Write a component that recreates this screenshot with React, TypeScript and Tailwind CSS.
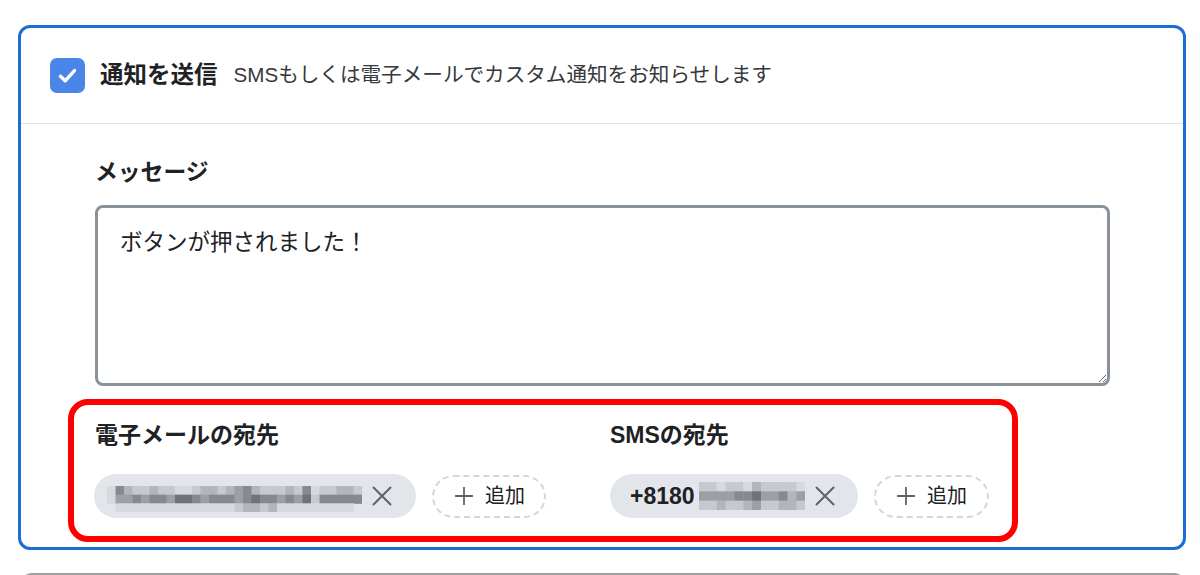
import React from "react";

const FONT = '"Liberation Sans", "Noto Sans CJK JP", sans-serif';

const SHADES = ["transparent", "#d6d9dd", "#c6c9cd", "#b2b5b9", "#9c9fa3", "#86898d", "#6f7276"];

function Pixelate({ rows, cell, w, h }: { rows: number[][]; cell: number; w: number; h: number }) {
  return (
    <svg width={w} height={h} viewBox={`0 0 ${w} ${h}`} className="block shrink-0">
      {rows.map((row, r) =>
        row.map((v, c) =>
          v === 0 ? null : (
            <rect key={`${r}-${c}`} x={c * cell} y={r * (h / rows.length)} width={cell + 0.5} height={h / rows.length + 0.5} fill={SHADES[v]} />
          )
        )
      )}
    </svg>
  );
}

function XIcon() {
  return (
    <svg width="20" height="20" viewBox="0 0 20 20" className="block shrink-0">
      <path d="M1.5 1.5 L18.5 18.5 M18.5 1.5 L1.5 18.5" stroke="#5f6368" strokeWidth="2" strokeLinecap="round" fill="none" />
    </svg>
  );
}

function PlusIcon() {
  return (
    <svg width="18" height="18" viewBox="0 0 18 18" className="block shrink-0">
      <path d="M9 0.5 V17.5 M0.5 9 H17.5" stroke="#5f6368" strokeWidth="1.8" strokeLinecap="round" fill="none" />
    </svg>
  );
}

function AddButton({ w }: { w: string }) {
  return (
    <div className={`ml-4 flex h-[43px] ${w} items-center rounded-full border-2 border-dashed border-[#d3d6da] pl-[21px]`}>
      <PlusIcon />
      <span className="ml-3 text-[20px] leading-none text-[#202124]">追加</span>
    </div>
  );
}

const emailRows = [
  [1, 5, 3, 2, 2, 3, 2, 2, 1, 1, 2, 3, 3, 2, 3, 4, 5, 3, 2, 2, 2, 3, 2, 5, 1, 2, 2, 3, 3, 2],
  [1, 4, 4, 5, 4, 5, 5, 4, 6, 6, 5, 4, 5, 5, 5, 4, 5, 6, 5, 5, 4, 5, 4, 6, 2, 5, 5, 5, 5, 5],
  [0, 1, 1, 1, 1, 1, 1, 1, 1, 1, 1, 1, 1, 1, 1, 2, 3, 3, 2, 3, 1, 1, 1, 1, 1, 1, 1, 1, 1, 0],
];

const smsRows = [
  [2, 2, 1, 2, 2, 1, 3, 2, 2, 2, 2, 1],
  [4, 4, 4, 4, 5, 5, 6, 4, 4, 5, 3, 4],
  [2, 2, 3, 2, 2, 3, 4, 2, 2, 3, 3, 2],
];

export default function App() {
  return (
    <div className="min-h-screen bg-white pl-[18px] pt-[25px]" style={{ fontFamily: FONT }}>
      <div className="w-[1168px] rounded-[12px] border-[3px] border-[#1b6fd2]">
        {/* header */}
        <div className="flex h-[95px] items-center pl-[29px]">
          <div className="flex h-[35px] w-[35px] items-center justify-center rounded-[7px] bg-[#4a86e8]">
            <svg width="35" height="35" viewBox="0 0 35 35">
              <path d="M10.5 18.2 L15.2 22.8 L24.5 12.6" stroke="#ffffff" strokeWidth="3.4" strokeLinecap="round" strokeLinejoin="round" fill="none" />
            </svg>
          </div>
          <span className="ml-[15px] text-[23.5px] font-bold leading-none text-[#202124]">通知を送信</span>
          <span className="ml-4 text-[20.6px] leading-none text-[#35383c]">SMSもしくは電子メールでカスタム通知をお知らせします</span>
        </div>
        <div className="h-px bg-[#e1e4e8]" />

        {/* content */}
        <div className="pb-[5px] pl-[74px] pt-[32px]">
          <div className="h-[33px] text-[22.8px] font-bold leading-[33px] text-[#202124]">メッセージ</div>
          <textarea
            readOnly
            value="ボタンが押されました！"
            className="mt-4 block h-[181px] w-[1015px] rounded-[8px] border-[3px] border-[#8a9299] bg-white pl-[22px] pt-[18px] text-[22.5px] leading-[33px] text-[#202124] outline-none"
          />

          {/* recipients (highlighted) */}
          <div className="-ml-[27px] mt-[13px] flex h-[143px] w-[950px] rounded-[20px] border-[6px] border-[#ff0000] pl-[21px] pt-[14px]">
            {/* email */}
            <div className="w-[515px]">
              <div className="h-[33px] text-[23px] font-bold leading-[33px] text-[#202124]">電子メールの宛先</div>
              <div className="mt-[22px] flex items-center">
                <div className="-ml-px flex h-[44px] w-[322px] items-center rounded-full bg-[#e2e5e9] pl-[13px]">
                  <div className="translate-y-[3px]">
                    <Pixelate rows={emailRows} cell={8.5} w={255} h={26} />
                  </div>
                  <div className="ml-[10px]">
                    <XIcon />
                  </div>
                </div>
                <AddButton w="w-[114px]" />
              </div>
            </div>
            {/* sms */}
            <div>
              <div className="h-[33px] text-[23px] font-bold leading-[33px] text-[#202124]">SMSの宛先</div>
              <div className="mt-[22px] flex items-center">
                <div className="flex h-[44px] w-[248px] items-center rounded-full bg-[#e2e5e9] pl-[20px]">
                  <span className="w-[69px] text-[23px] font-bold leading-none text-[#202124]">+8180</span>
                  <Pixelate rows={smsRows} cell={8.85} w={106} h={28} />
                  <div className="ml-[10px]">
                    <XIcon />
                  </div>
                </div>
                <AddButton w="w-[115px]" />
              </div>
            </div>
          </div>
        </div>
      </div>

      <div className="ml-[2px] mt-[23px] h-[120px] w-[1166px] rounded-[12px] border-2 border-[#9aa0a6]" />
    </div>
  );
}
